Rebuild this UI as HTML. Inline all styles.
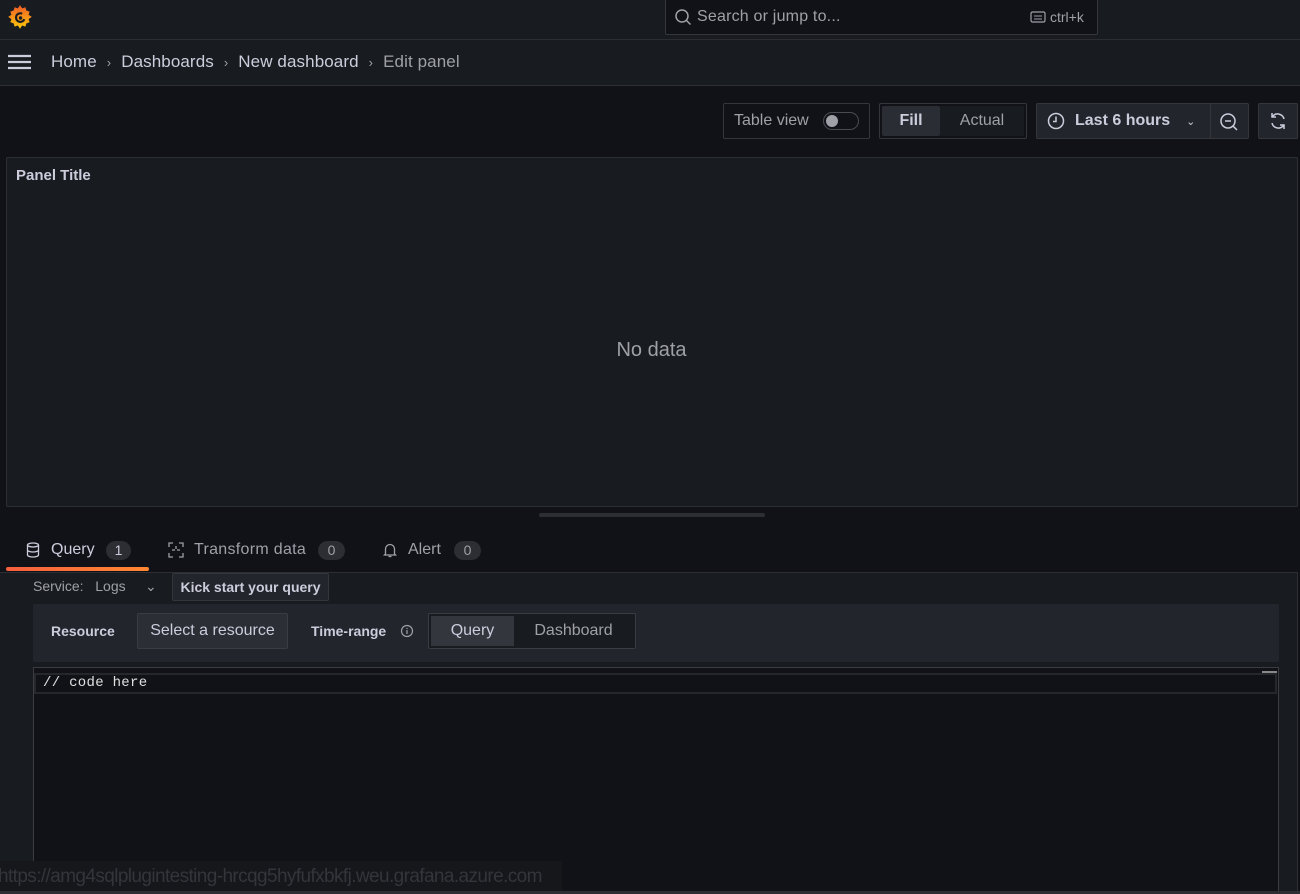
<!DOCTYPE html>
<html><head><style>
*{box-sizing:border-box;margin:0;padding:0}
body{width:1300px;height:894px;overflow:hidden;background:#111217;font-family:"Liberation Sans",sans-serif;color:#ccccdc;position:relative}
.abs{position:absolute}
.btn{position:absolute;border:1px solid #34363c;border-radius:2px;display:flex;align-items:center}
</style></head><body>
<div class="abs" style="left:0;top:0;width:1300px;height:40px;background:#181b1f;border-bottom:1px solid #2c2e33"></div>
<svg class="abs" style="left:6px;top:3px" width="28" height="30" viewBox="0 0 26 28">
<defs><linearGradient id="g" x1="0" y1="1" x2="0" y2="0"><stop offset="0" stop-color="#fbca0a"/><stop offset="1" stop-color="#f05a28"/></linearGradient></defs>
<path d="M13 2l2 3 3-1 1 3 3 1-1 3 3 2-3 2 1 3-3 1-1 3-3-1-2 3-2-3-3 1-1-3-3-1 1-3-3-2 3-2-1-3 3-1 1-3 3 1z" fill="url(#g)"/>
<path d="M17 15a4 4 0 1 1-2-5" fill="none" stroke="#181b1f" stroke-width="2"/><circle cx="13.5" cy="14" r="1.6" fill="#181b1f"/>
</svg>
<div class="abs" style="left:665px;top:0;width:433px;height:35px;background:#111217;border:1px solid #34363c;border-top:none;border-radius:0 0 2px 2px"></div>
<svg class="abs" style="left:674px;top:8px" width="18" height="18" viewBox="0 0 18 18"><circle cx="8" cy="8" r="6" fill="none" stroke="#9fa0a8" stroke-width="1.5"/><path d="M12.5 12.5l4 4" stroke="#9fa0a8" stroke-width="1.5"/></svg>
<div class="abs" style="left:697px;top:8px;font-size:16px;color:#9fa0a8;letter-spacing:0.2px">Search or jump to...</div>
<svg class="abs" style="left:1030px;top:11px" width="16" height="12" viewBox="0 0 16 12"><rect x="1" y="1" width="14" height="10" rx="1.5" fill="none" stroke="#9fa0a8" stroke-width="1.2"/><path d="M4 5h8M4 8h8" stroke="#9fa0a8"/></svg>
<div class="abs" style="left:1050px;top:9px;font-size:14px;color:#9fa0a8">ctrl+k</div>

<div class="abs" style="left:0;top:40px;width:1300px;height:46px;background:#181b1f;border-bottom:1px solid #2c2e33"></div>
<svg class="abs" style="left:8px;top:54px" width="24" height="16"><path d="M0 2h23M0 8h23M0 14h23" stroke="#ccccdc" stroke-width="2.2"/></svg>
<div class="abs" style="left:51px;top:52px;font-size:17px;white-space:nowrap;letter-spacing:0.1px"><span>Home</span><span style="color:#9fa0a8;margin:0 10px;font-size:13px">›</span><span>Dashboards</span><span style="color:#9fa0a8;margin:0 10px;font-size:13px">›</span><span>New dashboard</span><span style="color:#9fa0a8;margin:0 10px;font-size:13px">›</span><span style="color:#9fa0a8">Edit panel</span></div>

<div class="btn" style="left:723px;top:103px;width:147px;height:36px;padding-left:10px;color:#9fa0a8;font-size:16px">Table view<div style="margin-left:14px;width:36px;height:18px;border:1px solid #4a4b52;border-radius:9px;position:relative"><div style="position:absolute;left:2px;top:2px;width:12px;height:12px;border-radius:6px;background:#9fa0a8"></div></div></div>
<div class="btn" style="left:879px;top:103px;width:148px;height:36px;padding:2px">
<div style="width:58px;height:30px;background:#2a2d33;border-radius:2px;display:flex;align-items:center;justify-content:center;font-weight:bold;font-size:16px">Fill</div>
<div style="flex:1;height:30px;background:#181b1f;display:flex;align-items:center;justify-content:center;font-size:16px;color:#9fa0a8">Actual</div></div>
<div class="btn" style="left:1036px;top:103px;width:213px;height:36px;background:#22252b">
<svg style="margin-left:10px" width="18" height="18" viewBox="0 0 18 18"><circle cx="9" cy="9" r="7.5" fill="none" stroke="#ccccdc" stroke-width="1.5"/><path d="M9 4.5V9.5H6" fill="none" stroke="#ccccdc" stroke-width="1.5"/></svg>
<span style="margin-left:10px;font-weight:bold;font-size:16px">Last 6 hours</span><span style="margin-left:16px;font-size:11px">⌄</span>
<div style="position:absolute;left:173px;top:0;width:1px;height:34px;background:#34363c"></div>
<svg style="position:absolute;left:182px;top:8px" width="20" height="20" viewBox="0 0 20 20"><circle cx="9" cy="9" r="7" fill="none" stroke="#ccccdc" stroke-width="1.5"/><path d="M6 9h6M14 14l4 4" stroke="#ccccdc" stroke-width="1.5"/></svg></div>
<div class="btn" style="left:1258px;top:103px;width:40px;height:36px;background:#22252b;justify-content:center">
<svg width="20" height="20" viewBox="0 0 20 20"><path d="M16 8A6.5 6.5 0 0 0 4.5 5.5M4 12a6.5 6.5 0 0 0 11.5 2.5M4 2v4h4M16 18v-4h-4" fill="none" stroke="#ccccdc" stroke-width="1.5"/></svg></div>

<div class="abs" style="left:6px;top:157px;width:1292px;height:350px;background:#181b1f;border:1px solid #2c2e33;border-radius:2px"></div>
<div class="abs" style="left:16px;top:167px;font-size:15px;font-weight:bold">Panel Title</div>
<div class="abs" style="left:0;width:1303px;top:339px;text-align:center;font-size:20px;color:#9fa0a8">No data</div>
<div class="abs" style="left:539px;top:513px;width:226px;height:4px;background:#2c2e33;border-radius:2px"></div>

<svg class="abs" style="left:26px;top:542px" width="14" height="16" viewBox="0 0 14 16"><ellipse cx="7" cy="3" rx="5.5" ry="2" fill="none" stroke="#ccccdc" stroke-width="1.3"/><path d="M1.5 3v10c0 1 2.5 2 5.5 2s5.5-1 5.5-2V3M1.5 8c0 1 2.5 2 5.5 2s5.5-1 5.5-2" fill="none" stroke="#ccccdc" stroke-width="1.3"/></svg>
<div class="abs" style="left:51px;top:541px;font-size:16px">Query</div>
<div class="abs" style="left:106px;top:541px;width:25px;height:19px;border-radius:10px;background:#2c2e33;font-size:14px;text-align:center;line-height:19px">1</div>
<div class="abs" style="left:6px;top:567px;width:143px;height:4px;background:linear-gradient(90deg,#f55f3e,#ff8833);border-radius:2px"></div>
<svg class="abs" style="left:168px;top:542px" width="16" height="16" viewBox="0 0 16 16"><path d="M1 5V1h4M11 1h4v4M15 11v4h-4M5 15H1v-4M4 8h3M9 8h3M8 4v3" fill="none" stroke="#9fa0a8" stroke-width="1.3"/></svg>
<div class="abs" style="left:194px;top:541px;font-size:16px;color:#9fa0a8;letter-spacing:0.3px">Transform data</div>
<div class="abs" style="left:318px;top:541px;width:27px;height:19px;border-radius:10px;background:#2c2e33;font-size:14px;text-align:center;line-height:19px;color:#9fa0a8">0</div>
<svg class="abs" style="left:382px;top:542px" width="16" height="16" viewBox="0 0 16 16"><path d="M3.5 12V7a4.5 4.5 0 0 1 9 0v5l1 1h-11zM6.5 14.5h3" fill="none" stroke="#9fa0a8" stroke-width="1.3"/></svg>
<div class="abs" style="left:408px;top:541px;font-size:16px;color:#9fa0a8">Alert</div>
<div class="abs" style="left:454px;top:541px;width:27px;height:19px;border-radius:10px;background:#2c2e33;font-size:14px;text-align:center;line-height:19px;color:#9fa0a8">0</div>

<div class="abs" style="left:0;top:572px;width:1298px;height:322px;background:#181b1f;border-top:1px solid #2c2e33;border-right:1px solid #2c2e33"></div>
<div class="abs" style="left:33px;top:578px;font-size:14px;color:#9fa0a8;white-space:nowrap">Service:&nbsp;&nbsp;&nbsp;Logs&nbsp;&nbsp;&nbsp;&nbsp;&nbsp;⌄</div>
<div class="abs" style="left:172px;top:573px;width:157px;height:28px;background:#22252b;border:1px solid #34363c;border-radius:2px;font-size:14px;font-weight:bold;display:flex;align-items:center;justify-content:center">Kick start your query</div>
<div class="abs" style="left:33px;top:604px;width:1246px;height:58px;background:#22252b;border-radius:2px"></div>
<div class="abs" style="left:51px;top:623px;font-size:14px;font-weight:bold">Resource</div>
<div class="abs" style="left:137px;top:613px;width:151px;height:36px;background:#2c2e35;border:1px solid #3a3c42;border-radius:2px;font-size:16px;display:flex;align-items:center;justify-content:center">Select a resource</div>
<div class="abs" style="left:311px;top:623px;font-size:14px;font-weight:bold">Time-range</div>
<svg class="abs" style="left:400px;top:624px" width="14" height="14"><circle cx="7" cy="7" r="5.5" fill="none" stroke="#9fa0a8" stroke-width="1.2"/><path d="M7 6v4M7 4v1" stroke="#9fa0a8" stroke-width="1.2"/></svg>
<div class="abs" style="left:428px;top:613px;width:208px;height:36px;border:1px solid #3a3c42;border-radius:2px;background:#181b1f;padding:2px;display:flex">
<div style="width:83px;background:#33363d;display:flex;align-items:center;justify-content:center;font-size:16px">Query</div>
<div style="flex:1;display:flex;align-items:center;justify-content:center;font-size:16px;color:#9fa0a8">Dashboard</div></div>
<div class="abs" style="left:33px;top:667px;width:1246px;height:227px;background:#111217;border:1px solid #3a3c42;border-bottom:none"></div>
<div class="abs" style="left:34px;top:673px;width:1243px;height:21px;border:2px solid #25272c"></div>
<div class="abs" style="left:1262px;top:671px;width:15px;height:2px;background:#888"></div>
<div class="abs" style="left:43px;top:675px;font-family:'Liberation Mono',monospace;font-size:14px;color:#e0e0e0;letter-spacing:0.3px">// code here</div>
<div class="abs" style="left:0;top:861px;width:562px;height:33px;background:#15171b"></div>
<div class="abs" style="left:-2px;top:866px;font-size:19px;color:#33353b;letter-spacing:-0.6px;white-space:nowrap">https://amg4sqlplugintesting-hrcqg5hyfufxbkfj.weu.grafana.azure.com</div>
<div class="abs" style="left:0;top:891px;width:1300px;height:3px;background:#2c2e33"></div>
</body></html>
